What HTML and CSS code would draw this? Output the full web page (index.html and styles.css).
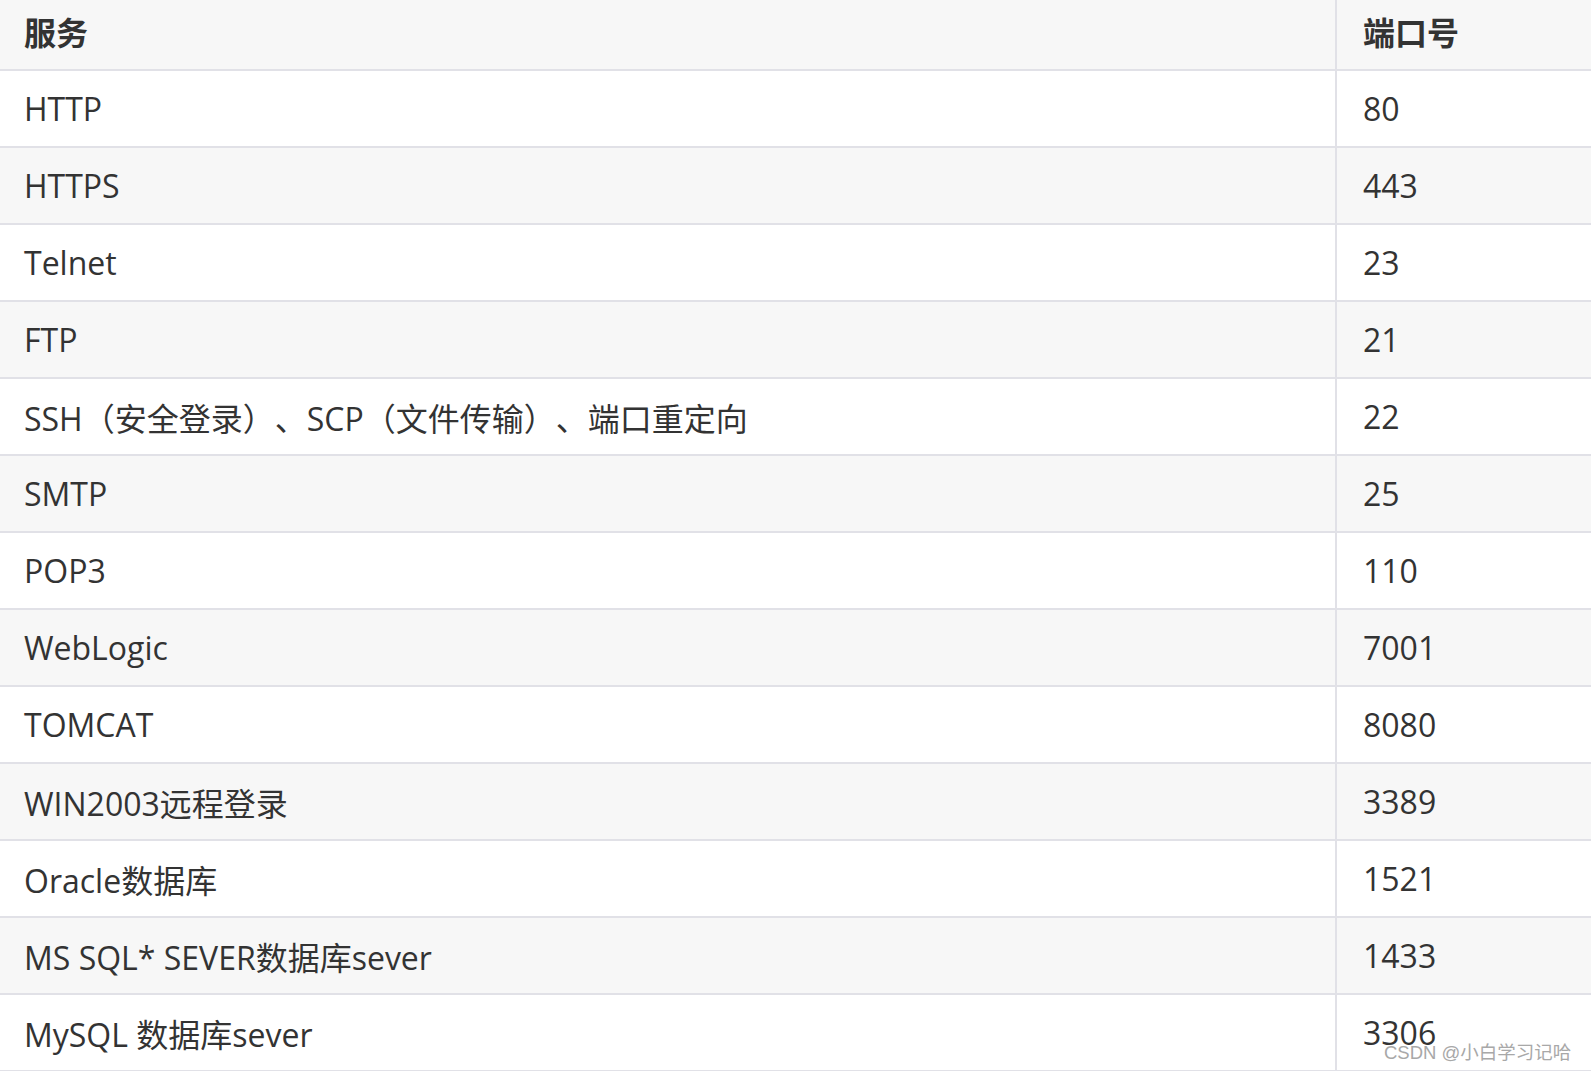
FILE: index.html
```html
<!DOCTYPE html>
<html lang="zh-CN">
<head>
<meta charset="utf-8">
<title>端口号</title>
<link rel="stylesheet" href="styles.css">
</head>
<body>
<div class="page">
<table class="ports">
  <thead>
    <tr><th class="svc">服务</th><th class="port">端口号</th></tr>
  </thead>
  <tbody>
    <tr><td class="svc">HTTP</td><td class="port">80</td></tr>
    <tr><td class="svc">HTTPS</td><td class="port">443</td></tr>
    <tr><td class="svc">Telnet</td><td class="port">23</td></tr>
    <tr><td class="svc">FTP</td><td class="port">21</td></tr>
    <tr><td class="svc">SSH（安全登录）、SCP（文件传输）、端口重定向</td><td class="port">22</td></tr>
    <tr><td class="svc">SMTP</td><td class="port">25</td></tr>
    <tr><td class="svc">POP3</td><td class="port">110</td></tr>
    <tr><td class="svc">WebLogic</td><td class="port">7001</td></tr>
    <tr><td class="svc">TOMCAT</td><td class="port">8080</td></tr>
    <tr><td class="svc">WIN2003远程登录</td><td class="port">3389</td></tr>
    <tr><td class="svc">Oracle数据库</td><td class="port">1521</td></tr>
    <tr><td class="svc">MS SQL* SEVER数据库sever</td><td class="port">1433</td></tr>
    <tr><td class="svc">MySQL 数据库sever</td><td class="port">3306</td></tr>
  </tbody>
</table>
<div class="watermark">CSDN @小白学习记哈</div>
</div>
</body>
</html>
```
FILE: styles.css
```css
html, body {
  margin: 0;
  padding: 0;
  background: #ffffff;
  overflow: hidden;
}
.page {
  position: relative;
  width: 1591px;
  height: 1071px;
  overflow: hidden;
}
.ports {
  width: 1591px;
  border-collapse: collapse;
  table-layout: fixed;
  font-family: "Open Sans", "Noto Sans CJK SC", sans-serif;
  font-size: 32px;
  color: #333333;
  text-spacing-trim: space-all;
}
.ports th, .ports td {
  padding: 0 0 0 24px;
  text-align: left;
  vertical-align: middle;
  border-bottom: 2px solid #e1e1e7;
  white-space: nowrap;
  overflow: hidden;
}
.ports .svc {
  width: 1311px;
  border-right: 2px solid #e1e1e7;
}
.ports .port {
  padding-left: 26px;
}
.ports th {
  height: 63px;
  padding-bottom: 6px;
  line-height: 1.2;
  font-weight: 700;
  background: #f7f7f7;
  font-family: "Noto Sans CJK SC", sans-serif;
  font-size: 32px;
}
.ports td {
  height: 75px;
  font-weight: 400;
}
.ports tbody tr:nth-child(even) td {
  background: #f7f7f7;
}
.ports tbody tr:nth-child(odd) td {
  background: #ffffff;
}
.watermark {
  position: absolute;
  left: 1384px;
  top: 1038px;
  font-family: "Liberation Sans", "Noto Sans CJK SC", sans-serif;
  font-size: 18.5px;
  color: #a8a8a8;
  text-shadow: 0 0 2px #ffffff, 0 0 1px #ffffff;
  white-space: nowrap;
}
```
